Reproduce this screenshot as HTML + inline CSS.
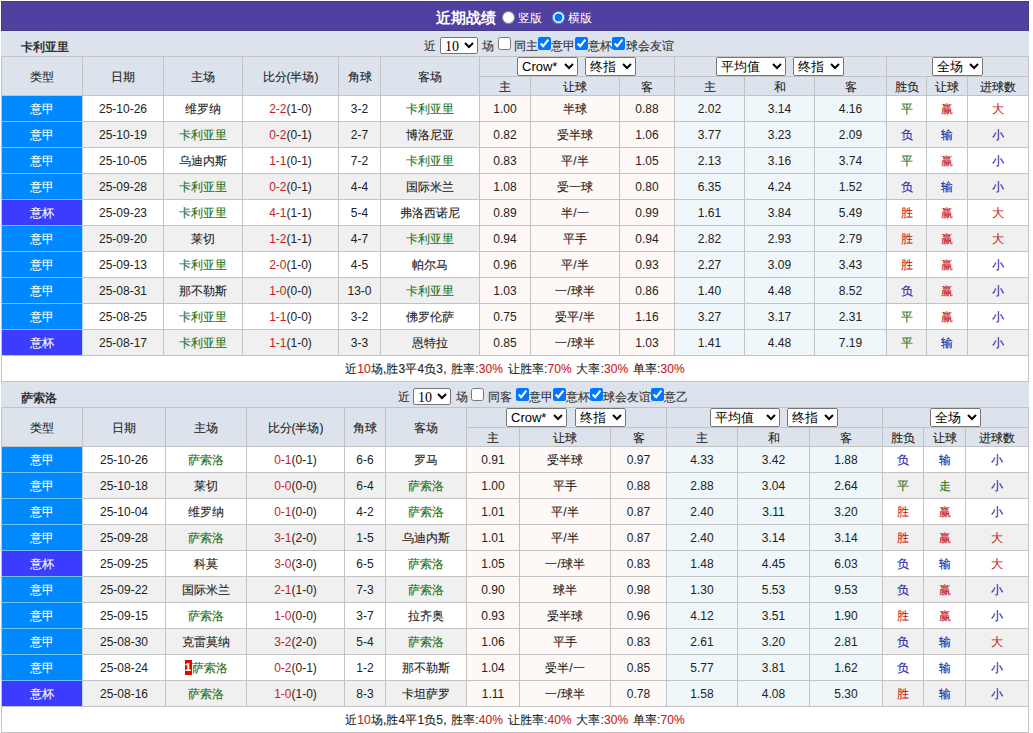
<!DOCTYPE html>
<html><head><meta charset="utf-8"><style>
html,body{margin:0;padding:0;background:#fff;}
body{width:1033px;height:733px;position:relative;overflow:hidden;font-family:"Liberation Sans",sans-serif;font-size:12px;color:#333;}
body>div{position:absolute;}
.c{text-align:center;white-space:nowrap;overflow:hidden;}
.k{-webkit-text-stroke:0.1px currentColor;}
r{color:#c81c1c;}
.rc{display:inline-block;vertical-align:top;margin-top:4px;width:7px;height:15px;line-height:15px;background:#e00;color:#fff;font-weight:bold;font-size:11px;text-align:center;}
.bar{left:1px;top:1px;width:1026px;height:28px;background:#5040a0;border:1px solid #453a86;}
.bt{color:#fff;white-space:nowrap;}
.rd{position:absolute;width:13px;height:13px;margin:0;}
.cb{position:absolute;width:13px;height:13px;margin:0;}
.ct{position:absolute;white-space:nowrap;color:#333;line-height:25px;height:25px;-webkit-text-stroke:0.1px currentColor;}
.tt{font-weight:bold;color:#333;font-size:12px;}
.ctl{height:25px;line-height:25px;white-space:nowrap;color:#333;}
.ctl input{margin:0;width:13px;height:13px;vertical-align:-2px;}
.s10{position:absolute;width:38px;height:17px;font-size:14px;padding:0 0 1px 0;margin:0;font-family:"Liberation Serif",serif;}
.sel{position:absolute;height:19px;font-size:13px;font-family:"Liberation Sans",sans-serif;padding:0;margin:0;}
</style></head><body>
<div class="bar"></div>
<div class="bt" style="left:436px;top:4px;font-size:15px;font-weight:bold;line-height:28px">近期战绩</div>
<input type="radio" name="v" class="rd" style="left:502px;top:11px">
<div class="bt" style="left:518px;top:6px;line-height:25px">竖版</div>
<input type="radio" name="v" class="rd" style="left:552px;top:11px" checked>
<div class="bt" style="left:568px;top:6px;line-height:25px">横版</div>
<div style="left:1px;top:56px;width:1028px;height:326px;background:#c3c3c3;"></div>
<div style="left:1px;top:32px;width:1028px;height:24px;background:#dce3ec;"></div>
<div class="tt" style="left:21px;top:35px;height:25px;line-height:25px">卡利亚里</div>
<div class="c k" style="left:2px;top:57px;width:80px;height:37px;padding-top:1px;line-height:38px;background:#dce3ec;color:#222;">类型</div>
<div class="c k" style="left:83px;top:57px;width:80px;height:37px;padding-top:1px;line-height:38px;background:#dce3ec;color:#222;">日期</div>
<div class="c k" style="left:164px;top:57px;width:78px;height:37px;padding-top:1px;line-height:38px;background:#dce3ec;color:#222;">主场</div>
<div class="c k" style="left:243px;top:57px;width:95px;height:37px;padding-top:1px;line-height:38px;background:#dce3ec;color:#222;">比分(半场)</div>
<div class="c k" style="left:339px;top:57px;width:41px;height:37px;padding-top:1px;line-height:38px;background:#dce3ec;color:#222;">角球</div>
<div class="c k" style="left:381px;top:57px;width:98px;height:37px;padding-top:1px;line-height:38px;background:#dce3ec;color:#222;">客场</div>
<div class="c" style="left:480px;top:57px;width:194px;height:18px;padding-top:1px;line-height:19px;background:#dce3ec;"></div>
<div class="c" style="left:675px;top:57px;width:211px;height:18px;padding-top:1px;line-height:19px;background:#dce3ec;"></div>
<div class="c" style="left:887px;top:57px;width:141px;height:18px;padding-top:1px;line-height:19px;background:#dce3ec;"></div>
<div class="c k" style="left:480px;top:77px;width:50px;height:17px;padding-top:1px;line-height:18px;background:#dce3ec;color:#222;">主</div>
<div class="c k" style="left:531px;top:77px;width:88px;height:17px;padding-top:1px;line-height:18px;background:#dce3ec;color:#222;">让球</div>
<div class="c k" style="left:620px;top:77px;width:54px;height:17px;padding-top:1px;line-height:18px;background:#dce3ec;color:#222;">客</div>
<div class="c k" style="left:675px;top:77px;width:69px;height:17px;padding-top:1px;line-height:18px;background:#dce3ec;color:#222;">主</div>
<div class="c k" style="left:745px;top:77px;width:69px;height:17px;padding-top:1px;line-height:18px;background:#dce3ec;color:#222;">和</div>
<div class="c k" style="left:815px;top:77px;width:71px;height:17px;padding-top:1px;line-height:18px;background:#dce3ec;color:#222;">客</div>
<div class="c k" style="left:887px;top:77px;width:39px;height:17px;padding-top:1px;line-height:18px;background:#dce3ec;color:#222;">胜负</div>
<div class="c k" style="left:927px;top:77px;width:40px;height:17px;padding-top:1px;line-height:18px;background:#dce3ec;color:#222;">让球</div>
<div class="c k" style="left:968px;top:77px;width:60px;height:17px;padding-top:1px;line-height:18px;background:#dce3ec;color:#222;">进球数</div>
<div class="c k" style="left:2px;top:96px;width:80px;height:24px;padding-top:1px;line-height:25px;background:#0088ff;color:#fff;">意甲</div>
<div style="left:82px;top:96px;width:1px;height:25px;background:#b8d8f4;"></div>
<div class="c" style="left:83px;top:96px;width:80px;height:24px;padding-top:1px;line-height:25px;background:#ffffff;color:#222;">25-10-26</div>
<div class="c k" style="left:164px;top:96px;width:78px;height:24px;padding-top:1px;line-height:25px;background:#ffffff;color:#222;">维罗纳</div>
<div class="c" style="left:243px;top:96px;width:95px;height:24px;padding-top:1px;line-height:25px;background:#ffffff;color:#222;"><r>2-2</r>(1-0)</div>
<div class="c" style="left:339px;top:96px;width:41px;height:24px;padding-top:1px;line-height:25px;background:#ffffff;color:#222;">3-2</div>
<div class="c k" style="left:381px;top:96px;width:98px;height:24px;padding-top:1px;line-height:25px;background:#ffffff;color:#1c721c;">卡利亚里</div>
<div class="c" style="left:480px;top:96px;width:50px;height:24px;padding-top:1px;line-height:25px;background:#fef9f6;color:#222;">1.00</div>
<div class="c k" style="left:531px;top:96px;width:88px;height:24px;padding-top:1px;line-height:25px;background:#fef9f6;color:#222;">半球</div>
<div class="c" style="left:620px;top:96px;width:54px;height:24px;padding-top:1px;line-height:25px;background:#fef9f6;color:#222;">0.88</div>
<div class="c" style="left:675px;top:96px;width:69px;height:24px;padding-top:1px;line-height:25px;background:#eff7fb;color:#222;">2.02</div>
<div class="c" style="left:745px;top:96px;width:69px;height:24px;padding-top:1px;line-height:25px;background:#eff7fb;color:#222;">3.14</div>
<div class="c" style="left:815px;top:96px;width:71px;height:24px;padding-top:1px;line-height:25px;background:#eff7fb;color:#222;">4.16</div>
<div class="c k" style="left:887px;top:96px;width:39px;height:24px;padding-top:1px;line-height:25px;background:#ffffff;color:#1c721c;">平</div>
<div class="c k" style="left:927px;top:96px;width:40px;height:24px;padding-top:1px;line-height:25px;background:#ffffff;color:#c81c1c;">赢</div>
<div class="c k" style="left:968px;top:96px;width:60px;height:24px;padding-top:1px;line-height:25px;background:#ffffff;color:#c81c1c;">大</div>
<div class="c k" style="left:2px;top:122px;width:80px;height:24px;padding-top:1px;line-height:25px;background:#0088ff;color:#fff;">意甲</div>
<div style="left:82px;top:122px;width:1px;height:25px;background:#b8d8f4;"></div>
<div style="left:2px;top:121px;width:80px;height:1px;background:#72c2ff;"></div>
<div class="c" style="left:83px;top:122px;width:80px;height:24px;padding-top:1px;line-height:25px;background:#f0f0f0;color:#222;">25-10-19</div>
<div class="c k" style="left:164px;top:122px;width:78px;height:24px;padding-top:1px;line-height:25px;background:#f0f0f0;color:#1c721c;">卡利亚里</div>
<div class="c" style="left:243px;top:122px;width:95px;height:24px;padding-top:1px;line-height:25px;background:#f0f0f0;color:#222;"><r>0-2</r>(0-1)</div>
<div class="c" style="left:339px;top:122px;width:41px;height:24px;padding-top:1px;line-height:25px;background:#f0f0f0;color:#222;">2-7</div>
<div class="c k" style="left:381px;top:122px;width:98px;height:24px;padding-top:1px;line-height:25px;background:#f0f0f0;color:#222;">博洛尼亚</div>
<div class="c" style="left:480px;top:122px;width:50px;height:24px;padding-top:1px;line-height:25px;background:#fef9f6;color:#222;">0.82</div>
<div class="c k" style="left:531px;top:122px;width:88px;height:24px;padding-top:1px;line-height:25px;background:#fef9f6;color:#222;">受半球</div>
<div class="c" style="left:620px;top:122px;width:54px;height:24px;padding-top:1px;line-height:25px;background:#fef9f6;color:#222;">1.06</div>
<div class="c" style="left:675px;top:122px;width:69px;height:24px;padding-top:1px;line-height:25px;background:#eff7fb;color:#222;">3.77</div>
<div class="c" style="left:745px;top:122px;width:69px;height:24px;padding-top:1px;line-height:25px;background:#eff7fb;color:#222;">3.23</div>
<div class="c" style="left:815px;top:122px;width:71px;height:24px;padding-top:1px;line-height:25px;background:#eff7fb;color:#222;">2.09</div>
<div class="c k" style="left:887px;top:122px;width:39px;height:24px;padding-top:1px;line-height:25px;background:#f0f0f0;color:#1a1aa8;">负</div>
<div class="c k" style="left:927px;top:122px;width:40px;height:24px;padding-top:1px;line-height:25px;background:#f0f0f0;color:#1a1aa8;">输</div>
<div class="c k" style="left:968px;top:122px;width:60px;height:24px;padding-top:1px;line-height:25px;background:#f0f0f0;color:#1a1aa8;">小</div>
<div class="c k" style="left:2px;top:148px;width:80px;height:24px;padding-top:1px;line-height:25px;background:#0088ff;color:#fff;">意甲</div>
<div style="left:82px;top:148px;width:1px;height:25px;background:#b8d8f4;"></div>
<div style="left:2px;top:147px;width:80px;height:1px;background:#72c2ff;"></div>
<div class="c" style="left:83px;top:148px;width:80px;height:24px;padding-top:1px;line-height:25px;background:#ffffff;color:#222;">25-10-05</div>
<div class="c k" style="left:164px;top:148px;width:78px;height:24px;padding-top:1px;line-height:25px;background:#ffffff;color:#222;">乌迪内斯</div>
<div class="c" style="left:243px;top:148px;width:95px;height:24px;padding-top:1px;line-height:25px;background:#ffffff;color:#222;"><r>1-1</r>(0-1)</div>
<div class="c" style="left:339px;top:148px;width:41px;height:24px;padding-top:1px;line-height:25px;background:#ffffff;color:#222;">7-2</div>
<div class="c k" style="left:381px;top:148px;width:98px;height:24px;padding-top:1px;line-height:25px;background:#ffffff;color:#1c721c;">卡利亚里</div>
<div class="c" style="left:480px;top:148px;width:50px;height:24px;padding-top:1px;line-height:25px;background:#fef9f6;color:#222;">0.83</div>
<div class="c k" style="left:531px;top:148px;width:88px;height:24px;padding-top:1px;line-height:25px;background:#fef9f6;color:#222;">平/半</div>
<div class="c" style="left:620px;top:148px;width:54px;height:24px;padding-top:1px;line-height:25px;background:#fef9f6;color:#222;">1.05</div>
<div class="c" style="left:675px;top:148px;width:69px;height:24px;padding-top:1px;line-height:25px;background:#eff7fb;color:#222;">2.13</div>
<div class="c" style="left:745px;top:148px;width:69px;height:24px;padding-top:1px;line-height:25px;background:#eff7fb;color:#222;">3.16</div>
<div class="c" style="left:815px;top:148px;width:71px;height:24px;padding-top:1px;line-height:25px;background:#eff7fb;color:#222;">3.74</div>
<div class="c k" style="left:887px;top:148px;width:39px;height:24px;padding-top:1px;line-height:25px;background:#ffffff;color:#1c721c;">平</div>
<div class="c k" style="left:927px;top:148px;width:40px;height:24px;padding-top:1px;line-height:25px;background:#ffffff;color:#c81c1c;">赢</div>
<div class="c k" style="left:968px;top:148px;width:60px;height:24px;padding-top:1px;line-height:25px;background:#ffffff;color:#1a1aa8;">小</div>
<div class="c k" style="left:2px;top:174px;width:80px;height:24px;padding-top:1px;line-height:25px;background:#0088ff;color:#fff;">意甲</div>
<div style="left:82px;top:174px;width:1px;height:25px;background:#b8d8f4;"></div>
<div style="left:2px;top:173px;width:80px;height:1px;background:#72c2ff;"></div>
<div class="c" style="left:83px;top:174px;width:80px;height:24px;padding-top:1px;line-height:25px;background:#f0f0f0;color:#222;">25-09-28</div>
<div class="c k" style="left:164px;top:174px;width:78px;height:24px;padding-top:1px;line-height:25px;background:#f0f0f0;color:#1c721c;">卡利亚里</div>
<div class="c" style="left:243px;top:174px;width:95px;height:24px;padding-top:1px;line-height:25px;background:#f0f0f0;color:#222;"><r>0-2</r>(0-1)</div>
<div class="c" style="left:339px;top:174px;width:41px;height:24px;padding-top:1px;line-height:25px;background:#f0f0f0;color:#222;">4-4</div>
<div class="c k" style="left:381px;top:174px;width:98px;height:24px;padding-top:1px;line-height:25px;background:#f0f0f0;color:#222;">国际米兰</div>
<div class="c" style="left:480px;top:174px;width:50px;height:24px;padding-top:1px;line-height:25px;background:#fef9f6;color:#222;">1.08</div>
<div class="c k" style="left:531px;top:174px;width:88px;height:24px;padding-top:1px;line-height:25px;background:#fef9f6;color:#222;">受一球</div>
<div class="c" style="left:620px;top:174px;width:54px;height:24px;padding-top:1px;line-height:25px;background:#fef9f6;color:#222;">0.80</div>
<div class="c" style="left:675px;top:174px;width:69px;height:24px;padding-top:1px;line-height:25px;background:#eff7fb;color:#222;">6.35</div>
<div class="c" style="left:745px;top:174px;width:69px;height:24px;padding-top:1px;line-height:25px;background:#eff7fb;color:#222;">4.24</div>
<div class="c" style="left:815px;top:174px;width:71px;height:24px;padding-top:1px;line-height:25px;background:#eff7fb;color:#222;">1.52</div>
<div class="c k" style="left:887px;top:174px;width:39px;height:24px;padding-top:1px;line-height:25px;background:#f0f0f0;color:#1a1aa8;">负</div>
<div class="c k" style="left:927px;top:174px;width:40px;height:24px;padding-top:1px;line-height:25px;background:#f0f0f0;color:#1a1aa8;">输</div>
<div class="c k" style="left:968px;top:174px;width:60px;height:24px;padding-top:1px;line-height:25px;background:#f0f0f0;color:#1a1aa8;">小</div>
<div class="c k" style="left:2px;top:200px;width:80px;height:24px;padding-top:1px;line-height:25px;background:#3c3cff;color:#fff;">意杯</div>
<div style="left:82px;top:200px;width:1px;height:25px;background:#b8d8f4;"></div>
<div style="left:2px;top:199px;width:80px;height:1px;background:#72c2ff;"></div>
<div class="c" style="left:83px;top:200px;width:80px;height:24px;padding-top:1px;line-height:25px;background:#ffffff;color:#222;">25-09-23</div>
<div class="c k" style="left:164px;top:200px;width:78px;height:24px;padding-top:1px;line-height:25px;background:#ffffff;color:#1c721c;">卡利亚里</div>
<div class="c" style="left:243px;top:200px;width:95px;height:24px;padding-top:1px;line-height:25px;background:#ffffff;color:#222;"><r>4-1</r>(1-1)</div>
<div class="c" style="left:339px;top:200px;width:41px;height:24px;padding-top:1px;line-height:25px;background:#ffffff;color:#222;">5-4</div>
<div class="c k" style="left:381px;top:200px;width:98px;height:24px;padding-top:1px;line-height:25px;background:#ffffff;color:#222;">弗洛西诺尼</div>
<div class="c" style="left:480px;top:200px;width:50px;height:24px;padding-top:1px;line-height:25px;background:#fef9f6;color:#222;">0.89</div>
<div class="c k" style="left:531px;top:200px;width:88px;height:24px;padding-top:1px;line-height:25px;background:#fef9f6;color:#222;">半/一</div>
<div class="c" style="left:620px;top:200px;width:54px;height:24px;padding-top:1px;line-height:25px;background:#fef9f6;color:#222;">0.99</div>
<div class="c" style="left:675px;top:200px;width:69px;height:24px;padding-top:1px;line-height:25px;background:#eff7fb;color:#222;">1.61</div>
<div class="c" style="left:745px;top:200px;width:69px;height:24px;padding-top:1px;line-height:25px;background:#eff7fb;color:#222;">3.84</div>
<div class="c" style="left:815px;top:200px;width:71px;height:24px;padding-top:1px;line-height:25px;background:#eff7fb;color:#222;">5.49</div>
<div class="c k" style="left:887px;top:200px;width:39px;height:24px;padding-top:1px;line-height:25px;background:#ffffff;color:#c81c1c;">胜</div>
<div class="c k" style="left:927px;top:200px;width:40px;height:24px;padding-top:1px;line-height:25px;background:#ffffff;color:#c81c1c;">赢</div>
<div class="c k" style="left:968px;top:200px;width:60px;height:24px;padding-top:1px;line-height:25px;background:#ffffff;color:#c81c1c;">大</div>
<div class="c k" style="left:2px;top:226px;width:80px;height:24px;padding-top:1px;line-height:25px;background:#0088ff;color:#fff;">意甲</div>
<div style="left:82px;top:226px;width:1px;height:25px;background:#b8d8f4;"></div>
<div style="left:2px;top:225px;width:80px;height:1px;background:#72c2ff;"></div>
<div class="c" style="left:83px;top:226px;width:80px;height:24px;padding-top:1px;line-height:25px;background:#f0f0f0;color:#222;">25-09-20</div>
<div class="c k" style="left:164px;top:226px;width:78px;height:24px;padding-top:1px;line-height:25px;background:#f0f0f0;color:#222;">莱切</div>
<div class="c" style="left:243px;top:226px;width:95px;height:24px;padding-top:1px;line-height:25px;background:#f0f0f0;color:#222;"><r>1-2</r>(1-1)</div>
<div class="c" style="left:339px;top:226px;width:41px;height:24px;padding-top:1px;line-height:25px;background:#f0f0f0;color:#222;">4-7</div>
<div class="c k" style="left:381px;top:226px;width:98px;height:24px;padding-top:1px;line-height:25px;background:#f0f0f0;color:#1c721c;">卡利亚里</div>
<div class="c" style="left:480px;top:226px;width:50px;height:24px;padding-top:1px;line-height:25px;background:#fef9f6;color:#222;">0.94</div>
<div class="c k" style="left:531px;top:226px;width:88px;height:24px;padding-top:1px;line-height:25px;background:#fef9f6;color:#222;">平手</div>
<div class="c" style="left:620px;top:226px;width:54px;height:24px;padding-top:1px;line-height:25px;background:#fef9f6;color:#222;">0.94</div>
<div class="c" style="left:675px;top:226px;width:69px;height:24px;padding-top:1px;line-height:25px;background:#eff7fb;color:#222;">2.82</div>
<div class="c" style="left:745px;top:226px;width:69px;height:24px;padding-top:1px;line-height:25px;background:#eff7fb;color:#222;">2.93</div>
<div class="c" style="left:815px;top:226px;width:71px;height:24px;padding-top:1px;line-height:25px;background:#eff7fb;color:#222;">2.79</div>
<div class="c k" style="left:887px;top:226px;width:39px;height:24px;padding-top:1px;line-height:25px;background:#f0f0f0;color:#c81c1c;">胜</div>
<div class="c k" style="left:927px;top:226px;width:40px;height:24px;padding-top:1px;line-height:25px;background:#f0f0f0;color:#c81c1c;">赢</div>
<div class="c k" style="left:968px;top:226px;width:60px;height:24px;padding-top:1px;line-height:25px;background:#f0f0f0;color:#c81c1c;">大</div>
<div class="c k" style="left:2px;top:252px;width:80px;height:24px;padding-top:1px;line-height:25px;background:#0088ff;color:#fff;">意甲</div>
<div style="left:82px;top:252px;width:1px;height:25px;background:#b8d8f4;"></div>
<div style="left:2px;top:251px;width:80px;height:1px;background:#72c2ff;"></div>
<div class="c" style="left:83px;top:252px;width:80px;height:24px;padding-top:1px;line-height:25px;background:#ffffff;color:#222;">25-09-13</div>
<div class="c k" style="left:164px;top:252px;width:78px;height:24px;padding-top:1px;line-height:25px;background:#ffffff;color:#1c721c;">卡利亚里</div>
<div class="c" style="left:243px;top:252px;width:95px;height:24px;padding-top:1px;line-height:25px;background:#ffffff;color:#222;"><r>2-0</r>(1-0)</div>
<div class="c" style="left:339px;top:252px;width:41px;height:24px;padding-top:1px;line-height:25px;background:#ffffff;color:#222;">4-5</div>
<div class="c k" style="left:381px;top:252px;width:98px;height:24px;padding-top:1px;line-height:25px;background:#ffffff;color:#222;">帕尔马</div>
<div class="c" style="left:480px;top:252px;width:50px;height:24px;padding-top:1px;line-height:25px;background:#fef9f6;color:#222;">0.96</div>
<div class="c k" style="left:531px;top:252px;width:88px;height:24px;padding-top:1px;line-height:25px;background:#fef9f6;color:#222;">平/半</div>
<div class="c" style="left:620px;top:252px;width:54px;height:24px;padding-top:1px;line-height:25px;background:#fef9f6;color:#222;">0.93</div>
<div class="c" style="left:675px;top:252px;width:69px;height:24px;padding-top:1px;line-height:25px;background:#eff7fb;color:#222;">2.27</div>
<div class="c" style="left:745px;top:252px;width:69px;height:24px;padding-top:1px;line-height:25px;background:#eff7fb;color:#222;">3.09</div>
<div class="c" style="left:815px;top:252px;width:71px;height:24px;padding-top:1px;line-height:25px;background:#eff7fb;color:#222;">3.43</div>
<div class="c k" style="left:887px;top:252px;width:39px;height:24px;padding-top:1px;line-height:25px;background:#ffffff;color:#c81c1c;">胜</div>
<div class="c k" style="left:927px;top:252px;width:40px;height:24px;padding-top:1px;line-height:25px;background:#ffffff;color:#c81c1c;">赢</div>
<div class="c k" style="left:968px;top:252px;width:60px;height:24px;padding-top:1px;line-height:25px;background:#ffffff;color:#1a1aa8;">小</div>
<div class="c k" style="left:2px;top:278px;width:80px;height:24px;padding-top:1px;line-height:25px;background:#0088ff;color:#fff;">意甲</div>
<div style="left:82px;top:278px;width:1px;height:25px;background:#b8d8f4;"></div>
<div style="left:2px;top:277px;width:80px;height:1px;background:#72c2ff;"></div>
<div class="c" style="left:83px;top:278px;width:80px;height:24px;padding-top:1px;line-height:25px;background:#f0f0f0;color:#222;">25-08-31</div>
<div class="c k" style="left:164px;top:278px;width:78px;height:24px;padding-top:1px;line-height:25px;background:#f0f0f0;color:#222;">那不勒斯</div>
<div class="c" style="left:243px;top:278px;width:95px;height:24px;padding-top:1px;line-height:25px;background:#f0f0f0;color:#222;"><r>1-0</r>(0-0)</div>
<div class="c" style="left:339px;top:278px;width:41px;height:24px;padding-top:1px;line-height:25px;background:#f0f0f0;color:#222;">13-0</div>
<div class="c k" style="left:381px;top:278px;width:98px;height:24px;padding-top:1px;line-height:25px;background:#f0f0f0;color:#1c721c;">卡利亚里</div>
<div class="c" style="left:480px;top:278px;width:50px;height:24px;padding-top:1px;line-height:25px;background:#fef9f6;color:#222;">1.03</div>
<div class="c k" style="left:531px;top:278px;width:88px;height:24px;padding-top:1px;line-height:25px;background:#fef9f6;color:#222;">一/球半</div>
<div class="c" style="left:620px;top:278px;width:54px;height:24px;padding-top:1px;line-height:25px;background:#fef9f6;color:#222;">0.86</div>
<div class="c" style="left:675px;top:278px;width:69px;height:24px;padding-top:1px;line-height:25px;background:#eff7fb;color:#222;">1.40</div>
<div class="c" style="left:745px;top:278px;width:69px;height:24px;padding-top:1px;line-height:25px;background:#eff7fb;color:#222;">4.48</div>
<div class="c" style="left:815px;top:278px;width:71px;height:24px;padding-top:1px;line-height:25px;background:#eff7fb;color:#222;">8.52</div>
<div class="c k" style="left:887px;top:278px;width:39px;height:24px;padding-top:1px;line-height:25px;background:#f0f0f0;color:#1a1aa8;">负</div>
<div class="c k" style="left:927px;top:278px;width:40px;height:24px;padding-top:1px;line-height:25px;background:#f0f0f0;color:#c81c1c;">赢</div>
<div class="c k" style="left:968px;top:278px;width:60px;height:24px;padding-top:1px;line-height:25px;background:#f0f0f0;color:#1a1aa8;">小</div>
<div class="c k" style="left:2px;top:304px;width:80px;height:24px;padding-top:1px;line-height:25px;background:#0088ff;color:#fff;">意甲</div>
<div style="left:82px;top:304px;width:1px;height:25px;background:#b8d8f4;"></div>
<div style="left:2px;top:303px;width:80px;height:1px;background:#72c2ff;"></div>
<div class="c" style="left:83px;top:304px;width:80px;height:24px;padding-top:1px;line-height:25px;background:#ffffff;color:#222;">25-08-25</div>
<div class="c k" style="left:164px;top:304px;width:78px;height:24px;padding-top:1px;line-height:25px;background:#ffffff;color:#1c721c;">卡利亚里</div>
<div class="c" style="left:243px;top:304px;width:95px;height:24px;padding-top:1px;line-height:25px;background:#ffffff;color:#222;"><r>1-1</r>(0-0)</div>
<div class="c" style="left:339px;top:304px;width:41px;height:24px;padding-top:1px;line-height:25px;background:#ffffff;color:#222;">3-2</div>
<div class="c k" style="left:381px;top:304px;width:98px;height:24px;padding-top:1px;line-height:25px;background:#ffffff;color:#222;">佛罗伦萨</div>
<div class="c" style="left:480px;top:304px;width:50px;height:24px;padding-top:1px;line-height:25px;background:#fef9f6;color:#222;">0.75</div>
<div class="c k" style="left:531px;top:304px;width:88px;height:24px;padding-top:1px;line-height:25px;background:#fef9f6;color:#222;">受平/半</div>
<div class="c" style="left:620px;top:304px;width:54px;height:24px;padding-top:1px;line-height:25px;background:#fef9f6;color:#222;">1.16</div>
<div class="c" style="left:675px;top:304px;width:69px;height:24px;padding-top:1px;line-height:25px;background:#eff7fb;color:#222;">3.27</div>
<div class="c" style="left:745px;top:304px;width:69px;height:24px;padding-top:1px;line-height:25px;background:#eff7fb;color:#222;">3.17</div>
<div class="c" style="left:815px;top:304px;width:71px;height:24px;padding-top:1px;line-height:25px;background:#eff7fb;color:#222;">2.31</div>
<div class="c k" style="left:887px;top:304px;width:39px;height:24px;padding-top:1px;line-height:25px;background:#ffffff;color:#1c721c;">平</div>
<div class="c k" style="left:927px;top:304px;width:40px;height:24px;padding-top:1px;line-height:25px;background:#ffffff;color:#c81c1c;">赢</div>
<div class="c k" style="left:968px;top:304px;width:60px;height:24px;padding-top:1px;line-height:25px;background:#ffffff;color:#1a1aa8;">小</div>
<div class="c k" style="left:2px;top:330px;width:80px;height:24px;padding-top:1px;line-height:25px;background:#3c3cff;color:#fff;">意杯</div>
<div style="left:82px;top:330px;width:1px;height:25px;background:#b8d8f4;"></div>
<div style="left:2px;top:329px;width:80px;height:1px;background:#72c2ff;"></div>
<div class="c" style="left:83px;top:330px;width:80px;height:24px;padding-top:1px;line-height:25px;background:#f0f0f0;color:#222;">25-08-17</div>
<div class="c k" style="left:164px;top:330px;width:78px;height:24px;padding-top:1px;line-height:25px;background:#f0f0f0;color:#1c721c;">卡利亚里</div>
<div class="c" style="left:243px;top:330px;width:95px;height:24px;padding-top:1px;line-height:25px;background:#f0f0f0;color:#222;"><r>1-1</r>(1-0)</div>
<div class="c" style="left:339px;top:330px;width:41px;height:24px;padding-top:1px;line-height:25px;background:#f0f0f0;color:#222;">3-3</div>
<div class="c k" style="left:381px;top:330px;width:98px;height:24px;padding-top:1px;line-height:25px;background:#f0f0f0;color:#222;">恩特拉</div>
<div class="c" style="left:480px;top:330px;width:50px;height:24px;padding-top:1px;line-height:25px;background:#fef9f6;color:#222;">0.85</div>
<div class="c k" style="left:531px;top:330px;width:88px;height:24px;padding-top:1px;line-height:25px;background:#fef9f6;color:#222;">一/球半</div>
<div class="c" style="left:620px;top:330px;width:54px;height:24px;padding-top:1px;line-height:25px;background:#fef9f6;color:#222;">1.03</div>
<div class="c" style="left:675px;top:330px;width:69px;height:24px;padding-top:1px;line-height:25px;background:#eff7fb;color:#222;">1.41</div>
<div class="c" style="left:745px;top:330px;width:69px;height:24px;padding-top:1px;line-height:25px;background:#eff7fb;color:#222;">4.48</div>
<div class="c" style="left:815px;top:330px;width:71px;height:24px;padding-top:1px;line-height:25px;background:#eff7fb;color:#222;">7.19</div>
<div class="c k" style="left:887px;top:330px;width:39px;height:24px;padding-top:1px;line-height:25px;background:#f0f0f0;color:#1c721c;">平</div>
<div class="c k" style="left:927px;top:330px;width:40px;height:24px;padding-top:1px;line-height:25px;background:#f0f0f0;color:#1a1aa8;">输</div>
<div class="c k" style="left:968px;top:330px;width:60px;height:24px;padding-top:1px;line-height:25px;background:#f0f0f0;color:#1a1aa8;">小</div>
<div class="c k" style="left:2px;top:356px;width:1026px;height:24px;padding-top:1px;line-height:25px;background:#fff;color:#222;letter-spacing:0.12px;word-spacing:1px;">近<r>10</r>场,胜3平4负3, 胜率:<r>30%</r> 让胜率:<r>70%</r> 大率:<r>30%</r> 单率:<r>30%</r></div>
<div style="left:1px;top:31px;width:1028px;height:1px;background:#e4e0fa;"></div>
<div style="left:1px;top:407px;width:1028px;height:326px;background:#c3c3c3;"></div>
<div style="left:1px;top:382px;width:1028px;height:25px;background:#dce3ec;"></div>
<div class="tt" style="left:21px;top:386px;height:25px;line-height:25px">萨索洛</div>
<div class="c k" style="left:2px;top:408px;width:80px;height:37px;padding-top:1px;line-height:38px;background:#dce3ec;color:#222;">类型</div>
<div class="c k" style="left:83px;top:408px;width:82px;height:37px;padding-top:1px;line-height:38px;background:#dce3ec;color:#222;">日期</div>
<div class="c k" style="left:166px;top:408px;width:80px;height:37px;padding-top:1px;line-height:38px;background:#dce3ec;color:#222;">主场</div>
<div class="c k" style="left:247px;top:408px;width:97px;height:37px;padding-top:1px;line-height:38px;background:#dce3ec;color:#222;">比分(半场)</div>
<div class="c k" style="left:345px;top:408px;width:40px;height:37px;padding-top:1px;line-height:38px;background:#dce3ec;color:#222;">角球</div>
<div class="c k" style="left:386px;top:408px;width:80px;height:37px;padding-top:1px;line-height:38px;background:#dce3ec;color:#222;">客场</div>
<div class="c" style="left:467px;top:408px;width:199px;height:18px;padding-top:1px;line-height:19px;background:#dce3ec;"></div>
<div class="c" style="left:667px;top:408px;width:215px;height:18px;padding-top:1px;line-height:19px;background:#dce3ec;"></div>
<div class="c" style="left:883px;top:408px;width:145px;height:18px;padding-top:1px;line-height:19px;background:#dce3ec;"></div>
<div class="c k" style="left:467px;top:428px;width:52px;height:17px;padding-top:1px;line-height:18px;background:#dce3ec;color:#222;">主</div>
<div class="c k" style="left:520px;top:428px;width:90px;height:17px;padding-top:1px;line-height:18px;background:#dce3ec;color:#222;">让球</div>
<div class="c k" style="left:611px;top:428px;width:55px;height:17px;padding-top:1px;line-height:18px;background:#dce3ec;color:#222;">客</div>
<div class="c k" style="left:667px;top:428px;width:70px;height:17px;padding-top:1px;line-height:18px;background:#dce3ec;color:#222;">主</div>
<div class="c k" style="left:738px;top:428px;width:71px;height:17px;padding-top:1px;line-height:18px;background:#dce3ec;color:#222;">和</div>
<div class="c k" style="left:810px;top:428px;width:72px;height:17px;padding-top:1px;line-height:18px;background:#dce3ec;color:#222;">客</div>
<div class="c k" style="left:883px;top:428px;width:40px;height:17px;padding-top:1px;line-height:18px;background:#dce3ec;color:#222;">胜负</div>
<div class="c k" style="left:924px;top:428px;width:41px;height:17px;padding-top:1px;line-height:18px;background:#dce3ec;color:#222;">让球</div>
<div class="c k" style="left:966px;top:428px;width:62px;height:17px;padding-top:1px;line-height:18px;background:#dce3ec;color:#222;">进球数</div>
<div class="c k" style="left:2px;top:447px;width:80px;height:24px;padding-top:1px;line-height:25px;background:#0088ff;color:#fff;">意甲</div>
<div style="left:82px;top:447px;width:1px;height:25px;background:#b8d8f4;"></div>
<div class="c" style="left:83px;top:447px;width:82px;height:24px;padding-top:1px;line-height:25px;background:#ffffff;color:#222;">25-10-26</div>
<div class="c k" style="left:166px;top:447px;width:80px;height:24px;padding-top:1px;line-height:25px;background:#ffffff;color:#1c721c;">萨索洛</div>
<div class="c" style="left:247px;top:447px;width:97px;height:24px;padding-top:1px;line-height:25px;background:#ffffff;color:#222;"><r>0-1</r>(0-1)</div>
<div class="c" style="left:345px;top:447px;width:40px;height:24px;padding-top:1px;line-height:25px;background:#ffffff;color:#222;">6-6</div>
<div class="c k" style="left:386px;top:447px;width:80px;height:24px;padding-top:1px;line-height:25px;background:#ffffff;color:#222;">罗马</div>
<div class="c" style="left:467px;top:447px;width:52px;height:24px;padding-top:1px;line-height:25px;background:#fef9f6;color:#222;">0.91</div>
<div class="c k" style="left:520px;top:447px;width:90px;height:24px;padding-top:1px;line-height:25px;background:#fef9f6;color:#222;">受半球</div>
<div class="c" style="left:611px;top:447px;width:55px;height:24px;padding-top:1px;line-height:25px;background:#fef9f6;color:#222;">0.97</div>
<div class="c" style="left:667px;top:447px;width:70px;height:24px;padding-top:1px;line-height:25px;background:#eff7fb;color:#222;">4.33</div>
<div class="c" style="left:738px;top:447px;width:71px;height:24px;padding-top:1px;line-height:25px;background:#eff7fb;color:#222;">3.42</div>
<div class="c" style="left:810px;top:447px;width:72px;height:24px;padding-top:1px;line-height:25px;background:#eff7fb;color:#222;">1.88</div>
<div class="c k" style="left:883px;top:447px;width:40px;height:24px;padding-top:1px;line-height:25px;background:#ffffff;color:#1a1aa8;">负</div>
<div class="c k" style="left:924px;top:447px;width:41px;height:24px;padding-top:1px;line-height:25px;background:#ffffff;color:#1a1aa8;">输</div>
<div class="c k" style="left:966px;top:447px;width:62px;height:24px;padding-top:1px;line-height:25px;background:#ffffff;color:#1a1aa8;">小</div>
<div class="c k" style="left:2px;top:473px;width:80px;height:24px;padding-top:1px;line-height:25px;background:#0088ff;color:#fff;">意甲</div>
<div style="left:82px;top:473px;width:1px;height:25px;background:#b8d8f4;"></div>
<div style="left:2px;top:472px;width:80px;height:1px;background:#72c2ff;"></div>
<div class="c" style="left:83px;top:473px;width:82px;height:24px;padding-top:1px;line-height:25px;background:#f0f0f0;color:#222;">25-10-18</div>
<div class="c k" style="left:166px;top:473px;width:80px;height:24px;padding-top:1px;line-height:25px;background:#f0f0f0;color:#222;">莱切</div>
<div class="c" style="left:247px;top:473px;width:97px;height:24px;padding-top:1px;line-height:25px;background:#f0f0f0;color:#222;"><r>0-0</r>(0-0)</div>
<div class="c" style="left:345px;top:473px;width:40px;height:24px;padding-top:1px;line-height:25px;background:#f0f0f0;color:#222;">6-4</div>
<div class="c k" style="left:386px;top:473px;width:80px;height:24px;padding-top:1px;line-height:25px;background:#f0f0f0;color:#1c721c;">萨索洛</div>
<div class="c" style="left:467px;top:473px;width:52px;height:24px;padding-top:1px;line-height:25px;background:#fef9f6;color:#222;">1.00</div>
<div class="c k" style="left:520px;top:473px;width:90px;height:24px;padding-top:1px;line-height:25px;background:#fef9f6;color:#222;">平手</div>
<div class="c" style="left:611px;top:473px;width:55px;height:24px;padding-top:1px;line-height:25px;background:#fef9f6;color:#222;">0.88</div>
<div class="c" style="left:667px;top:473px;width:70px;height:24px;padding-top:1px;line-height:25px;background:#eff7fb;color:#222;">2.88</div>
<div class="c" style="left:738px;top:473px;width:71px;height:24px;padding-top:1px;line-height:25px;background:#eff7fb;color:#222;">3.04</div>
<div class="c" style="left:810px;top:473px;width:72px;height:24px;padding-top:1px;line-height:25px;background:#eff7fb;color:#222;">2.64</div>
<div class="c k" style="left:883px;top:473px;width:40px;height:24px;padding-top:1px;line-height:25px;background:#f0f0f0;color:#1c721c;">平</div>
<div class="c k" style="left:924px;top:473px;width:41px;height:24px;padding-top:1px;line-height:25px;background:#f0f0f0;color:#1c721c;">走</div>
<div class="c k" style="left:966px;top:473px;width:62px;height:24px;padding-top:1px;line-height:25px;background:#f0f0f0;color:#1a1aa8;">小</div>
<div class="c k" style="left:2px;top:499px;width:80px;height:24px;padding-top:1px;line-height:25px;background:#0088ff;color:#fff;">意甲</div>
<div style="left:82px;top:499px;width:1px;height:25px;background:#b8d8f4;"></div>
<div style="left:2px;top:498px;width:80px;height:1px;background:#72c2ff;"></div>
<div class="c" style="left:83px;top:499px;width:82px;height:24px;padding-top:1px;line-height:25px;background:#ffffff;color:#222;">25-10-04</div>
<div class="c k" style="left:166px;top:499px;width:80px;height:24px;padding-top:1px;line-height:25px;background:#ffffff;color:#222;">维罗纳</div>
<div class="c" style="left:247px;top:499px;width:97px;height:24px;padding-top:1px;line-height:25px;background:#ffffff;color:#222;"><r>0-1</r>(0-0)</div>
<div class="c" style="left:345px;top:499px;width:40px;height:24px;padding-top:1px;line-height:25px;background:#ffffff;color:#222;">4-2</div>
<div class="c k" style="left:386px;top:499px;width:80px;height:24px;padding-top:1px;line-height:25px;background:#ffffff;color:#1c721c;">萨索洛</div>
<div class="c" style="left:467px;top:499px;width:52px;height:24px;padding-top:1px;line-height:25px;background:#fef9f6;color:#222;">1.01</div>
<div class="c k" style="left:520px;top:499px;width:90px;height:24px;padding-top:1px;line-height:25px;background:#fef9f6;color:#222;">平/半</div>
<div class="c" style="left:611px;top:499px;width:55px;height:24px;padding-top:1px;line-height:25px;background:#fef9f6;color:#222;">0.87</div>
<div class="c" style="left:667px;top:499px;width:70px;height:24px;padding-top:1px;line-height:25px;background:#eff7fb;color:#222;">2.40</div>
<div class="c" style="left:738px;top:499px;width:71px;height:24px;padding-top:1px;line-height:25px;background:#eff7fb;color:#222;">3.11</div>
<div class="c" style="left:810px;top:499px;width:72px;height:24px;padding-top:1px;line-height:25px;background:#eff7fb;color:#222;">3.20</div>
<div class="c k" style="left:883px;top:499px;width:40px;height:24px;padding-top:1px;line-height:25px;background:#ffffff;color:#c81c1c;">胜</div>
<div class="c k" style="left:924px;top:499px;width:41px;height:24px;padding-top:1px;line-height:25px;background:#ffffff;color:#c81c1c;">赢</div>
<div class="c k" style="left:966px;top:499px;width:62px;height:24px;padding-top:1px;line-height:25px;background:#ffffff;color:#1a1aa8;">小</div>
<div class="c k" style="left:2px;top:525px;width:80px;height:24px;padding-top:1px;line-height:25px;background:#0088ff;color:#fff;">意甲</div>
<div style="left:82px;top:525px;width:1px;height:25px;background:#b8d8f4;"></div>
<div style="left:2px;top:524px;width:80px;height:1px;background:#72c2ff;"></div>
<div class="c" style="left:83px;top:525px;width:82px;height:24px;padding-top:1px;line-height:25px;background:#f0f0f0;color:#222;">25-09-28</div>
<div class="c k" style="left:166px;top:525px;width:80px;height:24px;padding-top:1px;line-height:25px;background:#f0f0f0;color:#1c721c;">萨索洛</div>
<div class="c" style="left:247px;top:525px;width:97px;height:24px;padding-top:1px;line-height:25px;background:#f0f0f0;color:#222;"><r>3-1</r>(2-0)</div>
<div class="c" style="left:345px;top:525px;width:40px;height:24px;padding-top:1px;line-height:25px;background:#f0f0f0;color:#222;">1-5</div>
<div class="c k" style="left:386px;top:525px;width:80px;height:24px;padding-top:1px;line-height:25px;background:#f0f0f0;color:#222;">乌迪内斯</div>
<div class="c" style="left:467px;top:525px;width:52px;height:24px;padding-top:1px;line-height:25px;background:#fef9f6;color:#222;">1.01</div>
<div class="c k" style="left:520px;top:525px;width:90px;height:24px;padding-top:1px;line-height:25px;background:#fef9f6;color:#222;">平/半</div>
<div class="c" style="left:611px;top:525px;width:55px;height:24px;padding-top:1px;line-height:25px;background:#fef9f6;color:#222;">0.87</div>
<div class="c" style="left:667px;top:525px;width:70px;height:24px;padding-top:1px;line-height:25px;background:#eff7fb;color:#222;">2.40</div>
<div class="c" style="left:738px;top:525px;width:71px;height:24px;padding-top:1px;line-height:25px;background:#eff7fb;color:#222;">3.14</div>
<div class="c" style="left:810px;top:525px;width:72px;height:24px;padding-top:1px;line-height:25px;background:#eff7fb;color:#222;">3.14</div>
<div class="c k" style="left:883px;top:525px;width:40px;height:24px;padding-top:1px;line-height:25px;background:#f0f0f0;color:#c81c1c;">胜</div>
<div class="c k" style="left:924px;top:525px;width:41px;height:24px;padding-top:1px;line-height:25px;background:#f0f0f0;color:#c81c1c;">赢</div>
<div class="c k" style="left:966px;top:525px;width:62px;height:24px;padding-top:1px;line-height:25px;background:#f0f0f0;color:#c81c1c;">大</div>
<div class="c k" style="left:2px;top:551px;width:80px;height:24px;padding-top:1px;line-height:25px;background:#3c3cff;color:#fff;">意杯</div>
<div style="left:82px;top:551px;width:1px;height:25px;background:#b8d8f4;"></div>
<div style="left:2px;top:550px;width:80px;height:1px;background:#72c2ff;"></div>
<div class="c" style="left:83px;top:551px;width:82px;height:24px;padding-top:1px;line-height:25px;background:#ffffff;color:#222;">25-09-25</div>
<div class="c k" style="left:166px;top:551px;width:80px;height:24px;padding-top:1px;line-height:25px;background:#ffffff;color:#222;">科莫</div>
<div class="c" style="left:247px;top:551px;width:97px;height:24px;padding-top:1px;line-height:25px;background:#ffffff;color:#222;"><r>3-0</r>(3-0)</div>
<div class="c" style="left:345px;top:551px;width:40px;height:24px;padding-top:1px;line-height:25px;background:#ffffff;color:#222;">6-5</div>
<div class="c k" style="left:386px;top:551px;width:80px;height:24px;padding-top:1px;line-height:25px;background:#ffffff;color:#1c721c;">萨索洛</div>
<div class="c" style="left:467px;top:551px;width:52px;height:24px;padding-top:1px;line-height:25px;background:#fef9f6;color:#222;">1.05</div>
<div class="c k" style="left:520px;top:551px;width:90px;height:24px;padding-top:1px;line-height:25px;background:#fef9f6;color:#222;">一/球半</div>
<div class="c" style="left:611px;top:551px;width:55px;height:24px;padding-top:1px;line-height:25px;background:#fef9f6;color:#222;">0.83</div>
<div class="c" style="left:667px;top:551px;width:70px;height:24px;padding-top:1px;line-height:25px;background:#eff7fb;color:#222;">1.48</div>
<div class="c" style="left:738px;top:551px;width:71px;height:24px;padding-top:1px;line-height:25px;background:#eff7fb;color:#222;">4.45</div>
<div class="c" style="left:810px;top:551px;width:72px;height:24px;padding-top:1px;line-height:25px;background:#eff7fb;color:#222;">6.03</div>
<div class="c k" style="left:883px;top:551px;width:40px;height:24px;padding-top:1px;line-height:25px;background:#ffffff;color:#1a1aa8;">负</div>
<div class="c k" style="left:924px;top:551px;width:41px;height:24px;padding-top:1px;line-height:25px;background:#ffffff;color:#1a1aa8;">输</div>
<div class="c k" style="left:966px;top:551px;width:62px;height:24px;padding-top:1px;line-height:25px;background:#ffffff;color:#c81c1c;">大</div>
<div class="c k" style="left:2px;top:577px;width:80px;height:24px;padding-top:1px;line-height:25px;background:#0088ff;color:#fff;">意甲</div>
<div style="left:82px;top:577px;width:1px;height:25px;background:#b8d8f4;"></div>
<div style="left:2px;top:576px;width:80px;height:1px;background:#72c2ff;"></div>
<div class="c" style="left:83px;top:577px;width:82px;height:24px;padding-top:1px;line-height:25px;background:#f0f0f0;color:#222;">25-09-22</div>
<div class="c k" style="left:166px;top:577px;width:80px;height:24px;padding-top:1px;line-height:25px;background:#f0f0f0;color:#222;">国际米兰</div>
<div class="c" style="left:247px;top:577px;width:97px;height:24px;padding-top:1px;line-height:25px;background:#f0f0f0;color:#222;"><r>2-1</r>(1-0)</div>
<div class="c" style="left:345px;top:577px;width:40px;height:24px;padding-top:1px;line-height:25px;background:#f0f0f0;color:#222;">7-3</div>
<div class="c k" style="left:386px;top:577px;width:80px;height:24px;padding-top:1px;line-height:25px;background:#f0f0f0;color:#1c721c;">萨索洛</div>
<div class="c" style="left:467px;top:577px;width:52px;height:24px;padding-top:1px;line-height:25px;background:#fef9f6;color:#222;">0.90</div>
<div class="c k" style="left:520px;top:577px;width:90px;height:24px;padding-top:1px;line-height:25px;background:#fef9f6;color:#222;">球半</div>
<div class="c" style="left:611px;top:577px;width:55px;height:24px;padding-top:1px;line-height:25px;background:#fef9f6;color:#222;">0.98</div>
<div class="c" style="left:667px;top:577px;width:70px;height:24px;padding-top:1px;line-height:25px;background:#eff7fb;color:#222;">1.30</div>
<div class="c" style="left:738px;top:577px;width:71px;height:24px;padding-top:1px;line-height:25px;background:#eff7fb;color:#222;">5.53</div>
<div class="c" style="left:810px;top:577px;width:72px;height:24px;padding-top:1px;line-height:25px;background:#eff7fb;color:#222;">9.53</div>
<div class="c k" style="left:883px;top:577px;width:40px;height:24px;padding-top:1px;line-height:25px;background:#f0f0f0;color:#1a1aa8;">负</div>
<div class="c k" style="left:924px;top:577px;width:41px;height:24px;padding-top:1px;line-height:25px;background:#f0f0f0;color:#c81c1c;">赢</div>
<div class="c k" style="left:966px;top:577px;width:62px;height:24px;padding-top:1px;line-height:25px;background:#f0f0f0;color:#1a1aa8;">小</div>
<div class="c k" style="left:2px;top:603px;width:80px;height:24px;padding-top:1px;line-height:25px;background:#0088ff;color:#fff;">意甲</div>
<div style="left:82px;top:603px;width:1px;height:25px;background:#b8d8f4;"></div>
<div style="left:2px;top:602px;width:80px;height:1px;background:#72c2ff;"></div>
<div class="c" style="left:83px;top:603px;width:82px;height:24px;padding-top:1px;line-height:25px;background:#ffffff;color:#222;">25-09-15</div>
<div class="c k" style="left:166px;top:603px;width:80px;height:24px;padding-top:1px;line-height:25px;background:#ffffff;color:#1c721c;">萨索洛</div>
<div class="c" style="left:247px;top:603px;width:97px;height:24px;padding-top:1px;line-height:25px;background:#ffffff;color:#222;"><r>1-0</r>(0-0)</div>
<div class="c" style="left:345px;top:603px;width:40px;height:24px;padding-top:1px;line-height:25px;background:#ffffff;color:#222;">3-7</div>
<div class="c k" style="left:386px;top:603px;width:80px;height:24px;padding-top:1px;line-height:25px;background:#ffffff;color:#222;">拉齐奥</div>
<div class="c" style="left:467px;top:603px;width:52px;height:24px;padding-top:1px;line-height:25px;background:#fef9f6;color:#222;">0.93</div>
<div class="c k" style="left:520px;top:603px;width:90px;height:24px;padding-top:1px;line-height:25px;background:#fef9f6;color:#222;">受半球</div>
<div class="c" style="left:611px;top:603px;width:55px;height:24px;padding-top:1px;line-height:25px;background:#fef9f6;color:#222;">0.96</div>
<div class="c" style="left:667px;top:603px;width:70px;height:24px;padding-top:1px;line-height:25px;background:#eff7fb;color:#222;">4.12</div>
<div class="c" style="left:738px;top:603px;width:71px;height:24px;padding-top:1px;line-height:25px;background:#eff7fb;color:#222;">3.51</div>
<div class="c" style="left:810px;top:603px;width:72px;height:24px;padding-top:1px;line-height:25px;background:#eff7fb;color:#222;">1.90</div>
<div class="c k" style="left:883px;top:603px;width:40px;height:24px;padding-top:1px;line-height:25px;background:#ffffff;color:#c81c1c;">胜</div>
<div class="c k" style="left:924px;top:603px;width:41px;height:24px;padding-top:1px;line-height:25px;background:#ffffff;color:#c81c1c;">赢</div>
<div class="c k" style="left:966px;top:603px;width:62px;height:24px;padding-top:1px;line-height:25px;background:#ffffff;color:#1a1aa8;">小</div>
<div class="c k" style="left:2px;top:629px;width:80px;height:24px;padding-top:1px;line-height:25px;background:#0088ff;color:#fff;">意甲</div>
<div style="left:82px;top:629px;width:1px;height:25px;background:#b8d8f4;"></div>
<div style="left:2px;top:628px;width:80px;height:1px;background:#72c2ff;"></div>
<div class="c" style="left:83px;top:629px;width:82px;height:24px;padding-top:1px;line-height:25px;background:#f0f0f0;color:#222;">25-08-30</div>
<div class="c k" style="left:166px;top:629px;width:80px;height:24px;padding-top:1px;line-height:25px;background:#f0f0f0;color:#222;">克雷莫纳</div>
<div class="c" style="left:247px;top:629px;width:97px;height:24px;padding-top:1px;line-height:25px;background:#f0f0f0;color:#222;"><r>3-2</r>(2-0)</div>
<div class="c" style="left:345px;top:629px;width:40px;height:24px;padding-top:1px;line-height:25px;background:#f0f0f0;color:#222;">5-4</div>
<div class="c k" style="left:386px;top:629px;width:80px;height:24px;padding-top:1px;line-height:25px;background:#f0f0f0;color:#1c721c;">萨索洛</div>
<div class="c" style="left:467px;top:629px;width:52px;height:24px;padding-top:1px;line-height:25px;background:#fef9f6;color:#222;">1.06</div>
<div class="c k" style="left:520px;top:629px;width:90px;height:24px;padding-top:1px;line-height:25px;background:#fef9f6;color:#222;">平手</div>
<div class="c" style="left:611px;top:629px;width:55px;height:24px;padding-top:1px;line-height:25px;background:#fef9f6;color:#222;">0.83</div>
<div class="c" style="left:667px;top:629px;width:70px;height:24px;padding-top:1px;line-height:25px;background:#eff7fb;color:#222;">2.61</div>
<div class="c" style="left:738px;top:629px;width:71px;height:24px;padding-top:1px;line-height:25px;background:#eff7fb;color:#222;">3.20</div>
<div class="c" style="left:810px;top:629px;width:72px;height:24px;padding-top:1px;line-height:25px;background:#eff7fb;color:#222;">2.81</div>
<div class="c k" style="left:883px;top:629px;width:40px;height:24px;padding-top:1px;line-height:25px;background:#f0f0f0;color:#1a1aa8;">负</div>
<div class="c k" style="left:924px;top:629px;width:41px;height:24px;padding-top:1px;line-height:25px;background:#f0f0f0;color:#1a1aa8;">输</div>
<div class="c k" style="left:966px;top:629px;width:62px;height:24px;padding-top:1px;line-height:25px;background:#f0f0f0;color:#c81c1c;">大</div>
<div class="c k" style="left:2px;top:655px;width:80px;height:24px;padding-top:1px;line-height:25px;background:#0088ff;color:#fff;">意甲</div>
<div style="left:82px;top:655px;width:1px;height:25px;background:#b8d8f4;"></div>
<div style="left:2px;top:654px;width:80px;height:1px;background:#72c2ff;"></div>
<div class="c" style="left:83px;top:655px;width:82px;height:24px;padding-top:1px;line-height:25px;background:#ffffff;color:#222;">25-08-24</div>
<div class="c k" style="left:166px;top:655px;width:80px;height:24px;padding-top:1px;line-height:25px;background:#ffffff;color:#1c721c;"><b class="rc">1</b>萨索洛</div>
<div class="c" style="left:247px;top:655px;width:97px;height:24px;padding-top:1px;line-height:25px;background:#ffffff;color:#222;"><r>0-2</r>(0-1)</div>
<div class="c" style="left:345px;top:655px;width:40px;height:24px;padding-top:1px;line-height:25px;background:#ffffff;color:#222;">1-2</div>
<div class="c k" style="left:386px;top:655px;width:80px;height:24px;padding-top:1px;line-height:25px;background:#ffffff;color:#222;">那不勒斯</div>
<div class="c" style="left:467px;top:655px;width:52px;height:24px;padding-top:1px;line-height:25px;background:#fef9f6;color:#222;">1.04</div>
<div class="c k" style="left:520px;top:655px;width:90px;height:24px;padding-top:1px;line-height:25px;background:#fef9f6;color:#222;">受半/一</div>
<div class="c" style="left:611px;top:655px;width:55px;height:24px;padding-top:1px;line-height:25px;background:#fef9f6;color:#222;">0.85</div>
<div class="c" style="left:667px;top:655px;width:70px;height:24px;padding-top:1px;line-height:25px;background:#eff7fb;color:#222;">5.77</div>
<div class="c" style="left:738px;top:655px;width:71px;height:24px;padding-top:1px;line-height:25px;background:#eff7fb;color:#222;">3.81</div>
<div class="c" style="left:810px;top:655px;width:72px;height:24px;padding-top:1px;line-height:25px;background:#eff7fb;color:#222;">1.62</div>
<div class="c k" style="left:883px;top:655px;width:40px;height:24px;padding-top:1px;line-height:25px;background:#ffffff;color:#1a1aa8;">负</div>
<div class="c k" style="left:924px;top:655px;width:41px;height:24px;padding-top:1px;line-height:25px;background:#ffffff;color:#1a1aa8;">输</div>
<div class="c k" style="left:966px;top:655px;width:62px;height:24px;padding-top:1px;line-height:25px;background:#ffffff;color:#1a1aa8;">小</div>
<div class="c k" style="left:2px;top:681px;width:80px;height:24px;padding-top:1px;line-height:25px;background:#3c3cff;color:#fff;">意杯</div>
<div style="left:82px;top:681px;width:1px;height:25px;background:#b8d8f4;"></div>
<div style="left:2px;top:680px;width:80px;height:1px;background:#72c2ff;"></div>
<div class="c" style="left:83px;top:681px;width:82px;height:24px;padding-top:1px;line-height:25px;background:#f0f0f0;color:#222;">25-08-16</div>
<div class="c k" style="left:166px;top:681px;width:80px;height:24px;padding-top:1px;line-height:25px;background:#f0f0f0;color:#1c721c;">萨索洛</div>
<div class="c" style="left:247px;top:681px;width:97px;height:24px;padding-top:1px;line-height:25px;background:#f0f0f0;color:#222;"><r>1-0</r>(1-0)</div>
<div class="c" style="left:345px;top:681px;width:40px;height:24px;padding-top:1px;line-height:25px;background:#f0f0f0;color:#222;">8-3</div>
<div class="c k" style="left:386px;top:681px;width:80px;height:24px;padding-top:1px;line-height:25px;background:#f0f0f0;color:#222;">卡坦萨罗</div>
<div class="c" style="left:467px;top:681px;width:52px;height:24px;padding-top:1px;line-height:25px;background:#fef9f6;color:#222;">1.11</div>
<div class="c k" style="left:520px;top:681px;width:90px;height:24px;padding-top:1px;line-height:25px;background:#fef9f6;color:#222;">一/球半</div>
<div class="c" style="left:611px;top:681px;width:55px;height:24px;padding-top:1px;line-height:25px;background:#fef9f6;color:#222;">0.78</div>
<div class="c" style="left:667px;top:681px;width:70px;height:24px;padding-top:1px;line-height:25px;background:#eff7fb;color:#222;">1.58</div>
<div class="c" style="left:738px;top:681px;width:71px;height:24px;padding-top:1px;line-height:25px;background:#eff7fb;color:#222;">4.08</div>
<div class="c" style="left:810px;top:681px;width:72px;height:24px;padding-top:1px;line-height:25px;background:#eff7fb;color:#222;">5.30</div>
<div class="c k" style="left:883px;top:681px;width:40px;height:24px;padding-top:1px;line-height:25px;background:#f0f0f0;color:#c81c1c;">胜</div>
<div class="c k" style="left:924px;top:681px;width:41px;height:24px;padding-top:1px;line-height:25px;background:#f0f0f0;color:#1a1aa8;">输</div>
<div class="c k" style="left:966px;top:681px;width:62px;height:24px;padding-top:1px;line-height:25px;background:#f0f0f0;color:#1a1aa8;">小</div>
<div class="c k" style="left:2px;top:707px;width:1026px;height:24px;padding-top:1px;line-height:25px;background:#fff;color:#222;letter-spacing:0.12px;word-spacing:1px;">近<r>10</r>场,胜4平1负5, 胜率:<r>40%</r> 让胜率:<r>40%</r> 大率:<r>30%</r> 单率:<r>70%</r></div>
<div class="ct" style="left:424px;top:34px">近</div><select class="s10" style="left:440px;top:37px"><option>10</option></select><div class="ct" style="left:482px;top:34px">场</div><input type="checkbox" class="cb" style="left:498px;top:37px"><div class="ct" style="left:514px;top:34px">同主</div><input type="checkbox" class="cb" style="left:538px;top:37px" checked><div class="ct" style="left:551px;top:34px">意甲</div><input type="checkbox" class="cb" style="left:575px;top:37px" checked><div class="ct" style="left:588px;top:34px">意杯</div><input type="checkbox" class="cb" style="left:612px;top:37px" checked><div class="ct" style="left:626px;top:34px">球会友谊</div>
<div class="ct" style="left:398px;top:385px">近</div><select class="s10" style="left:413px;top:388px"><option>10</option></select><div class="ct" style="left:456px;top:385px">场</div><input type="checkbox" class="cb" style="left:471px;top:388px"><div class="ct" style="left:488px;top:385px">同客</div><input type="checkbox" class="cb" style="left:516px;top:388px" checked><div class="ct" style="left:529px;top:385px">意甲</div><input type="checkbox" class="cb" style="left:553px;top:388px" checked><div class="ct" style="left:566px;top:385px">意杯</div><input type="checkbox" class="cb" style="left:590px;top:388px" checked><div class="ct" style="left:603px;top:385px">球会友谊</div><input type="checkbox" class="cb" style="left:651px;top:388px" checked><div class="ct" style="left:664px;top:385px">意乙</div>
<select class="sel" style="left:517px;top:57px;width:61px"><option>Crow*</option></select><select class="sel" style="left:585px;top:57px;width:51px"><option>终指</option></select><select class="sel" style="left:716px;top:57px;width:70px"><option>平均值</option></select><select class="sel" style="left:793px;top:57px;width:51px"><option>终指</option></select><select class="sel" style="left:932px;top:57px;width:51px"><option>全场</option></select>
<select class="sel" style="left:506px;top:408px;width:61px"><option>Crow*</option></select><select class="sel" style="left:575px;top:408px;width:51px"><option>终指</option></select><select class="sel" style="left:710px;top:408px;width:70px"><option>平均值</option></select><select class="sel" style="left:787px;top:408px;width:51px"><option>终指</option></select><select class="sel" style="left:930px;top:408px;width:51px"><option>全场</option></select>
</body></html>
